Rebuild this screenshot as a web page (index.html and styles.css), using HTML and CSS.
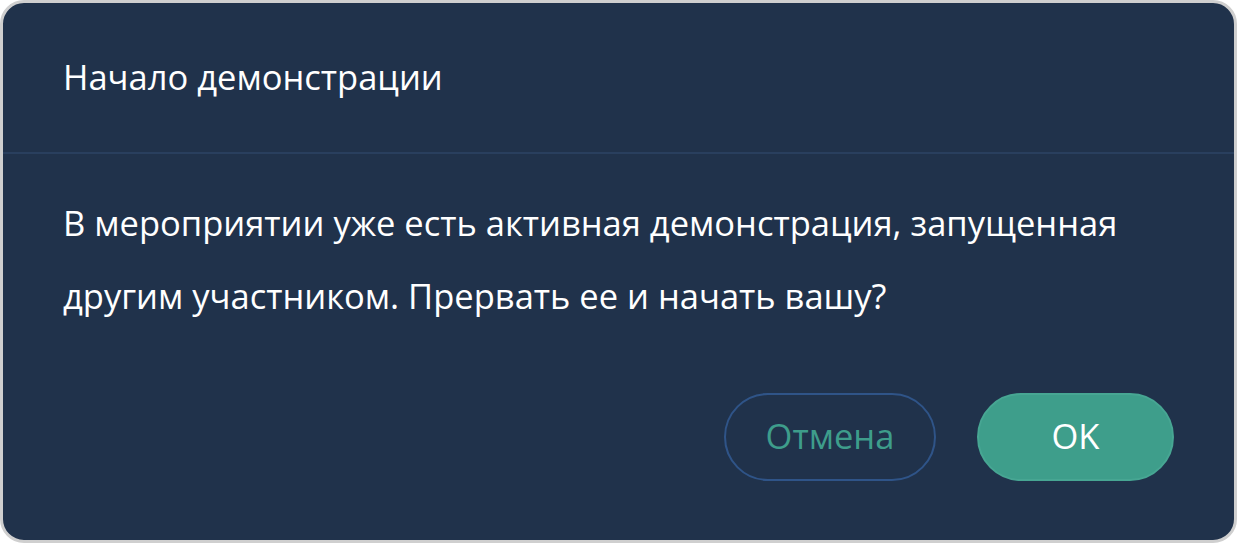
FILE: index.html
```html
<!DOCTYPE html>
<html lang="ru">
<head>
<meta charset="utf-8">
<link rel="stylesheet" href="styles.css">
</head>
<body>
<div class="dialog">
  <div class="dialog-header">
    <h1 class="dialog-title">Начало демонстрации</h1>
  </div>
  <div class="dialog-body">
    <p class="dialog-text">В мероприятии уже есть активная демонстрация, запущенная другим участником. Прервать ее и начать вашу?</p>
  </div>
  <div class="dialog-footer">
    <button class="btn btn-cancel">Отмена</button>
    <button class="btn btn-ok">OK</button>
  </div>
</div>
</body>
</html>
```

FILE: styles.css
```css
html, body {
  margin: 0;
  padding: 0;
  background: #ffffff;
}
body {
  width: 1237px;
  height: 543px;
  font-family: "Open Sans", "Noto Sans", sans-serif;
}
.dialog {
  box-sizing: border-box;
  width: 1237px;
  height: 543px;
  background: #20324b;
  border: 3px solid #cfcfcf;
  border-radius: 24px;
  display: flex;
  flex-direction: column;
  color: #ffffff;
}
.dialog-header {
  height: 149px;
  border-bottom: 2px solid #293f5e;
  display: flex;
  align-items: center;
  padding: 0 60px;
}
.dialog-title {
  margin: 0;
  font-size: 34.5px;
  font-weight: 400;
  line-height: 1;
  padding-bottom: 1px;
}
.dialog-body {
  padding: 32px 60px 0 60px;
}
.dialog-text {
  margin: 0;
  font-size: 34.5px;
  line-height: 73px;
}
.dialog-footer {
  display: flex;
  justify-content: flex-end;
  gap: 41px;
  padding: 0 60px;
  margin-top: auto;
  margin-bottom: 59px;
}
.btn {
  box-sizing: border-box;
  height: 88px;
  border-radius: 44px;
  font-family: "Open Sans", "Noto Sans", sans-serif;
  font-size: 34.5px;
  padding: 0 0 3px 0;
  cursor: pointer;
}
.btn-cancel {
  width: 212px;
  background: transparent;
  border: 2px solid #2f5488;
  color: #3e9d8b;
}
.btn-ok {
  width: 197px;
  background: #3e9e8b;
  border: 2px solid #47a693;
  color: #ffffff;
}
```
